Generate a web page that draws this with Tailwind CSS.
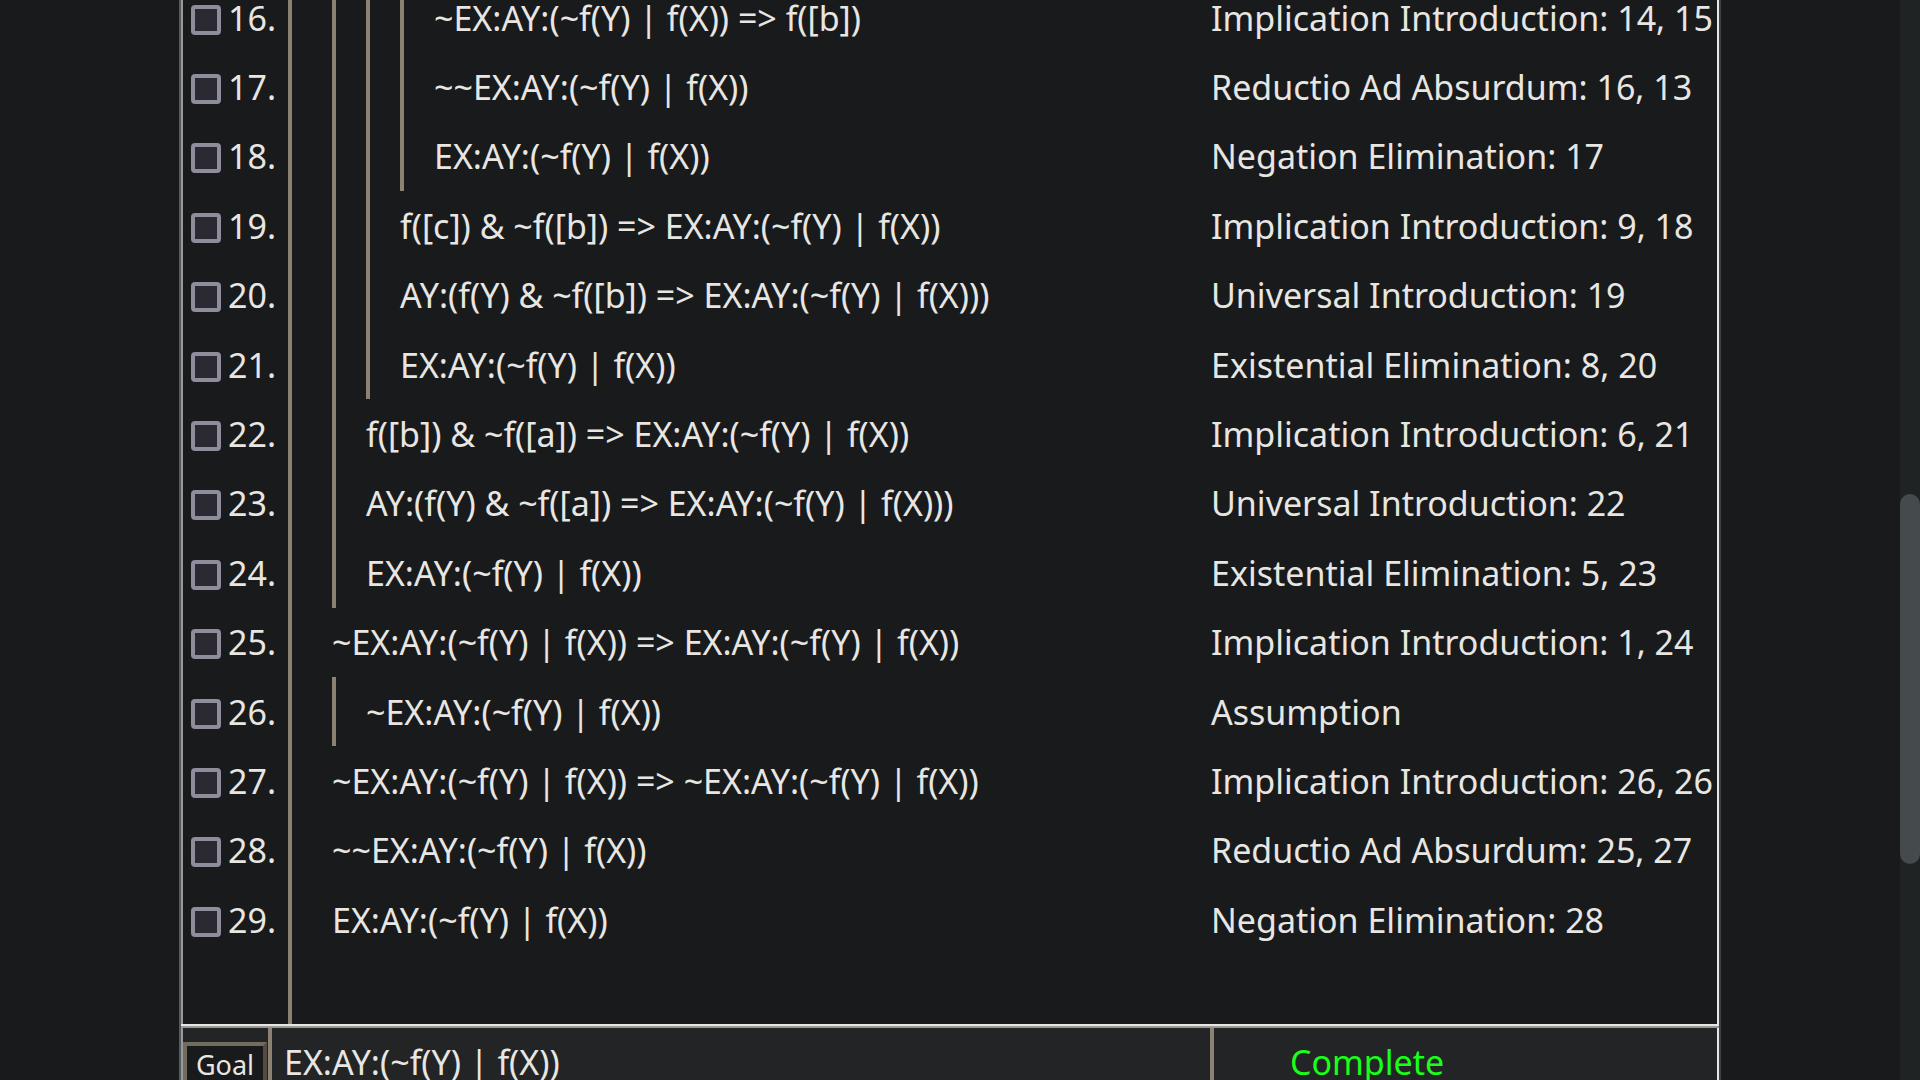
<!DOCTYPE html>
<html lang="en">
<head>
<meta charset="utf-8">
<title>Natural Deduction Proof</title>
<script src="https://cdn.jsdelivr.net/npm/@tailwindcss/browser@4"></script>
</head>
<body class="flex h-screen overflow-hidden bg-[#181a1b] font-['Noto_Sans',sans-serif] text-[34px] leading-[48px] text-[#e8e6e3]">
<main class="min-w-0 flex-1 overflow-hidden px-[179px]">
  <div class="-mt-[17px] border-l-2 border-r-2 border-l-[#545b5e] border-r-[#3b4042]">
    <div class="border-l-2 border-r-2 border-l-[#999999] border-r-[#e8e6e3]">
      <table class="block w-full whitespace-nowrap">
        <tbody id="proof" class="grid h-[1041px] w-full auto-rows-fr"></tbody>
      </table>
    </div>
    <div class="h-[2px] bg-[#e8e6e3]"></div>
    <div class="h-[2px] bg-[#999999]"></div>
    <div class="flex h-[90px] border-l-2 border-r-2 border-l-[#999999] border-r-[#e8e6e3] bg-[#222426]">
      <div class="flex w-[85px] items-start pt-[14px] pr-px">
        <button type="button" class="h-[46px] w-full border-4 border-t-[#736b5e] border-r-[#544c43] border-b-[#544c43] border-l-[#736b5e] bg-[#181a1b] text-center text-[27px] leading-[38px]">Goal</button>
      </div>
      <div class="flex-1 border-l-4 border-[#8c8273] pt-[10px] pl-3">EX:AY:(~f(Y) | f(X))</div>
      <div class="w-[507px] border-l-4 border-[#8c8273] pt-[10px] pl-[76px] text-[#1aff1a]">Complete</div>
    </div>
  </div>
</main>
<div class="flex h-full w-5 flex-col bg-[#202324] pt-[494px]" role="scrollbar" aria-controls="proof" aria-valuenow="60" aria-orientation="vertical">
  <div class="h-[370px] rounded-full bg-[#454a4d]"></div>
</div>
<script>
// [line number, subproof depth, formula, justification]
const lines = [
  [16, 3, '~EX:AY:(~f(Y) | f(X)) => f([b])', 'Implication Introduction: 14, 15'],
  [17, 3, '~~EX:AY:(~f(Y) | f(X))', 'Reductio Ad Absurdum: 16, 13'],
  [18, 3, 'EX:AY:(~f(Y) | f(X))', 'Negation Elimination: 17'],
  [19, 2, 'f([c]) & ~f([b]) => EX:AY:(~f(Y) | f(X))', 'Implication Introduction: 9, 18'],
  [20, 2, 'AY:(f(Y) & ~f([b]) => EX:AY:(~f(Y) | f(X)))', 'Universal Introduction: 19'],
  [21, 2, 'EX:AY:(~f(Y) | f(X))', 'Existential Elimination: 8, 20'],
  [22, 1, 'f([b]) & ~f([a]) => EX:AY:(~f(Y) | f(X))', 'Implication Introduction: 6, 21'],
  [23, 1, 'AY:(f(Y) & ~f([a]) => EX:AY:(~f(Y) | f(X)))', 'Universal Introduction: 22'],
  [24, 1, 'EX:AY:(~f(Y) | f(X))', 'Existential Elimination: 5, 23'],
  [25, 0, '~EX:AY:(~f(Y) | f(X)) => EX:AY:(~f(Y) | f(X))', 'Implication Introduction: 1, 24'],
  [26, 1, '~EX:AY:(~f(Y) | f(X))', 'Assumption'],
  [27, 0, '~EX:AY:(~f(Y) | f(X)) => ~EX:AY:(~f(Y) | f(X))', 'Implication Introduction: 26, 26'],
  [28, 0, '~~EX:AY:(~f(Y) | f(X))', 'Reductio Ad Absurdum: 25, 27'],
  [29, 0, 'EX:AY:(~f(Y) | f(X))', 'Negation Elimination: 28'],
];
const esc = s => s.replace(/&/g, '&amp;').replace(/>/g, '&gt;');
const bar = '<span class="w-[34px] border-l-4 border-[#8c8273]"></span>';
const row = 'grid grid-cols-[105px_minmax(0,1fr)_506px]';
document.getElementById('proof').innerHTML = lines.map(([n, depth, formula, why]) => `
  <tr class="${row}">
    <td class="flex items-center gap-[7px] pl-2">
      <input type="checkbox" id="line${n}" class="mt-1 size-[30px] appearance-none rounded-[4px] border-4 border-[#8f8c9c] bg-[#2b2a33]">
      <label for="line${n}">${n}.</label>
    </td>
    <td class="flex border-l-4 border-[#8c8273] pl-10">${bar.repeat(depth)}<span class="self-center">${esc(formula)}</span></td>
    <td class="flex items-center">${why}</td>
  </tr>`).join('') + `
  <tr class="${row}"><td></td><td class="border-l-4 border-[#8c8273]"></td><td></td></tr>`;
</script>
</body>
</html>
